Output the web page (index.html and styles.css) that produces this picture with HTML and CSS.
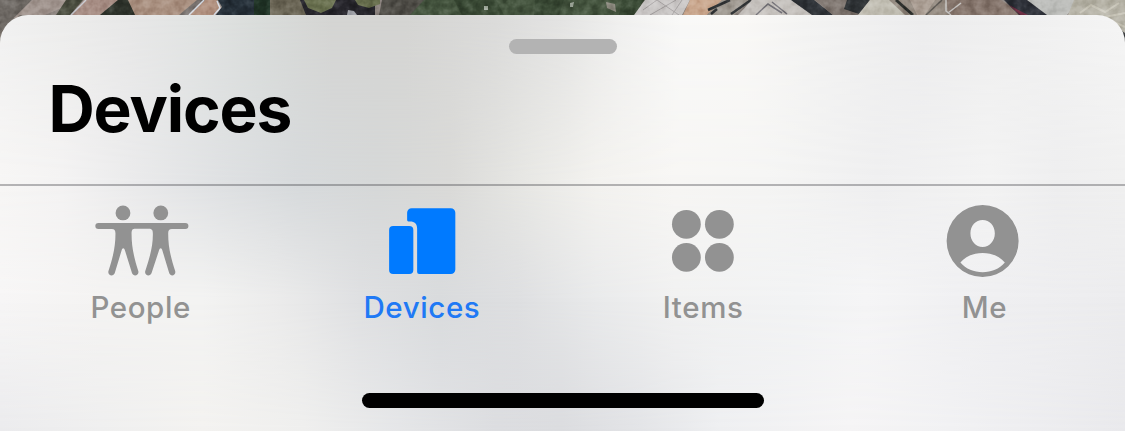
FILE: index.html
```html
<!DOCTYPE html>
<html lang="en">
<head>
<meta charset="utf-8">
<title>Devices</title>
<link rel="stylesheet" href="styles.css">
</head>
<body>
<div class="screen">
  <svg class="map" viewBox="0 0 1125 46" aria-hidden="true">
    <defs>
      <filter id="grain" x="0" y="0" width="100%" height="100%" color-interpolation-filters="sRGB">
        <feGaussianBlur in="SourceGraphic" stdDeviation=".6" result="soft"/>
        <feTurbulence type="fractalNoise" baseFrequency=".12" numOctaves="3" seed="8"/>
        <feColorMatrix values="1.6 0 0 0 -.35  1.6 0 0 0 -.35  1.6 0 0 0 -.35  0 0 0 0 .35"/>
        <feBlend in2="soft" mode="soft-light"/>
      </filter>
    </defs>
    <g filter="url(#grain)">
      <path fill="#8d8580" d="M0 0h1125v46H0z"/>
      <path fill="#6f6a65" d="M0 0h32L0 32z"/>
      <path fill="#a69a94" d="M32 0h48L38 18H14z"/>
      <path fill="#777069" d="M0 32L20 15h14L0 46z"/>
      <path fill="#4d5042" d="M66 0h17L70 15H56z"/>
      <path fill="#aa9188" d="M84 0h34L100 15H71z"/>
      <path stroke="#c9ccd2" stroke-width="1.5" d="M86 0L71 15"/>
      <path fill="#31362e" d="M118 0h11l9 15h-38z"/>
      <path fill="#aa9181" d="M128 0h69l-9 15h-53z"/>
      <path fill="#77716e" d="M197 0h7l-16 15h-9z"/>
      <path fill="#b39483" d="M205 0h12l4 8-6 7h-26z"/>
      <path fill="none" stroke="#d8dde5" stroke-width="1.5" d="M204 0l-15 15M217 1l3 7-6 7"/>
      <path fill="#263039" d="M218 0h38v15h-40l6-8z"/>
      <path fill="#203326" d="M254 0h16v15h-16z"/>
      <path fill="#6b6656" d="M270 0h38l10 15h-48z"/>
      <path fill="#27262c" d="M300 0h75v15h-69z"/>
      <path fill="#69704f" d="M304 0h32l-4 8-11 5-13-5zM355 0h25v4l-11 4-11-3z"/>
      <path fill="#9d9fa5" d="M348 10l6 1 3 4h-10z"/>
      <path fill="#52504a" d="M382 0h46l-12 15h-37z"/>
      <path fill="#465640" d="M424 0h221l-15 15H410z"/>
      <path fill="#3b4b36" d="M454 0h42l8 15h-42zM535 0h29l-5 15h-25zM622 0h22l-8 15h-17z"/>
      <path fill="#a4aca0" d="M484 6h4v4h-4zM570 3l4-1-1 5h-3z"/>
      <path fill="#8d8b80" d="M606 2l9 2 1 8-9-4z"/>
      <path fill="#cbc8c7" d="M645 0h45l-8 15h-48z"/>
      <path fill="none" stroke="#a7a3a3" d="M643 10l14-10 22 15M650 15l26-15M682 0l-10 15"/>
      <path fill="#caa88f" d="M690 0h32l-15 15h-24z"/>
      <path fill="#a19b93" d="M722 0h29l-17 15h-27z"/>
      <path fill="none" stroke="#333638" stroke-width="2.500" d="M708 10l22-10M731 14l20-14M711 14l6-5"/>
      <path fill="#c7c3bf" d="M752 0h42l20 15h-76z"/>
      <path fill="none" stroke="#77757b" stroke-width="1.500" d="M756 15l12-11 14 9M772 2l15 12"/>
      <path fill="#34383d" d="M791 0h23l19 15h-14L805 5l15 10h-8z"/>
      <path fill="#7e756f" d="M815 0h60l-12 15h-30z"/>
      <path fill="#303437" d="M847 0h23l-11 14-15-5z"/>
      <path fill="#c3c0b5" d="M870 0h20l21 15h-53z"/>
      <path fill="#948a80" d="M889 0h110l28 15H905z"/>
      <path fill="none" stroke="#2e302d" stroke-width="3" d="M896 0l17 15"/>
      <path fill="#b0a49a" d="M910 0h25l-10 15h-8z"/>
      <path fill="none" stroke="#5d5954" stroke-width="1.500" d="M942 0l-16 15"/>
      <path fill="#88786f" d="M946 0h55l22 15h-74z"/>
      <path fill="none" stroke="#c8c6c4" stroke-width="1.500" d="M948 13l13-10M946 0v11l5 4"/>
      <path fill="#30333b" d="M1004 0h24l22 15h-31z"/>
      <path fill="#713247" d="M1009 5l19 10h-8z"/>
      <path fill="#bfc0bd" d="M1027 0h52l-12 15h-20z"/>
      <path fill="#b8b5a9" d="M1074 0h51v46l-22-30-35-1z"/>
      <path fill="none" stroke="#cbc8bc" stroke-width="2" d="M1080 13l11-8 14 7 14-9M1105 17l20-4M1114 22l11 5"/>
      <path fill="#44474a" d="M1122 31l3 2v13h-3z"/>
    </g>
  </svg>

  <main class="sheet">
    <svg class="glass" viewBox="0 15 1125 416" preserveAspectRatio="none" aria-hidden="true">
      <defs>
        <linearGradient id="row1">
          <stop offset="0" stop-color="#f1f1f1"/><stop offset=".055" stop-color="#ededec"/><stop offset=".115" stop-color="#e8e8e8"/><stop offset=".17" stop-color="#e2e4e3"/><stop offset=".23" stop-color="#dadddb"/><stop offset=".295" stop-color="#d5d5d3"/><stop offset=".36" stop-color="#d5d5d3"/><stop offset=".44" stop-color="#dbdbda"/><stop offset=".5" stop-color="#e4e4e3"/><stop offset=".55" stop-color="#f0f0ef"/><stop offset=".605" stop-color="#f9f9f8"/><stop offset=".66" stop-color="#faf9f7"/><stop offset=".715" stop-color="#f4f4f3"/><stop offset=".82" stop-color="#ededee"/><stop offset=".9" stop-color="#f0f0f0"/><stop offset="1" stop-color="#f5f5f5"/>
        </linearGradient>
        <linearGradient id="row2">
          <stop offset="0" stop-color="#f7f6f5"/><stop offset=".055" stop-color="#f4f3f3"/><stop offset=".115" stop-color="#ebebec"/><stop offset=".195" stop-color="#dfe1e3"/><stop offset=".265" stop-color="#d7dadc"/><stop offset=".335" stop-color="#d6d8d8"/><stop offset=".4" stop-color="#dadad8"/><stop offset=".46" stop-color="#e6e6e3"/><stop offset=".53" stop-color="#f3f2ef"/><stop offset=".6" stop-color="#f7f6f4"/><stop offset=".68" stop-color="#f5f5f4"/><stop offset=".78" stop-color="#efeff0"/><stop offset=".88" stop-color="#f3f3f3"/><stop offset=".94" stop-color="#eeeeef"/><stop offset="1" stop-color="#f0f0f0"/>
        </linearGradient>
        <linearGradient id="row3">
          <stop offset="0" stop-color="#f7f6f6"/><stop offset=".09" stop-color="#f4f3f2"/><stop offset=".18" stop-color="#f3f3f2"/><stop offset=".25" stop-color="#ebebeb"/><stop offset=".32" stop-color="#dfe0e2"/><stop offset=".39" stop-color="#d9dbdd"/><stop offset=".46" stop-color="#dedfe1"/><stop offset=".53" stop-color="#e9eaeb"/><stop offset=".6" stop-color="#f1f1f1"/><stop offset=".71" stop-color="#f2f3f4"/><stop offset=".77" stop-color="#f5f5f6"/><stop offset=".85" stop-color="#f0f0f2"/><stop offset="1" stop-color="#ececee"/>
        </linearGradient>
        <linearGradient id="row4">
          <stop offset="0" stop-color="#ebebed"/><stop offset=".09" stop-color="#efefef"/><stop offset=".18" stop-color="#f3f2f0"/><stop offset=".27" stop-color="#efefee"/><stop offset=".355" stop-color="#e5e6e8"/><stop offset=".44" stop-color="#dcdde0"/><stop offset=".5" stop-color="#dbdcdf"/><stop offset=".57" stop-color="#e3e4e7"/><stop offset=".64" stop-color="#eeeff1"/><stop offset=".755" stop-color="#f5f4f5"/><stop offset=".845" stop-color="#f1f1f3"/><stop offset="1" stop-color="#e9e9ec"/>
        </linearGradient>
        <linearGradient id="fade" x2="0" y2="1"><stop offset="0" stop-color="#fff" stop-opacity="0"/><stop offset="1" stop-color="#fff"/></linearGradient>
        <mask id="m2" class="alpha-mask" maskUnits="userSpaceOnUse" x="0" y="15" width="1125" height="170"><path fill="url(#fade)" d="M0 15h1125v170H0z"/></mask>
        <mask id="m3" class="alpha-mask" maskUnits="userSpaceOnUse" x="0" y="185" width="1125" height="115"><path fill="url(#fade)" d="M0 185h1125v115H0z"/></mask>
        <mask id="m4" class="alpha-mask" maskUnits="userSpaceOnUse" x="0" y="300" width="1125" height="131"><path fill="url(#fade)" d="M0 300h1125v131H0z"/></mask>
      </defs>
      <path fill="url(#row1)" d="M0 15h1125v170H0z"/>
      <path fill="url(#row2)" mask="url(#m2)" d="M0 15h1125v170H0z"/>
      <path fill="url(#row2)" d="M0 185h1125v115H0z"/>
      <path fill="url(#row3)" mask="url(#m3)" d="M0 185h1125v115H0z"/>
      <path fill="url(#row3)" d="M0 300h1125v131H0z"/>
      <path fill="url(#row4)" mask="url(#m4)" d="M0 300h1125v131H0z"/>
    </svg>

    <header class="header">
      <div class="grabber"></div>
      <h1 class="title">Devices</h1>
    </header>

    <nav class="tabs">
      <a class="tab">
        <svg class="icon" viewBox="92.625 200 96 80">
          <circle cx="122.6" cy="212.9" r="7.4"/><circle cx="160.4" cy="212.9" r="7.4"/>
          <path d="M98 222.900h87a3 3 0 0 1 0 6.100h-13.500c-2.500 0-3.700 1.300-3.700 4 0 14 2.500 24 7 38 1.200 4.500-4.600 6.200-6 2l-6.800-22.500c-.8-3-2.600-3-3.400 0L151.200 273c-1.400 4.200-7.600 2.500-6.300-2 4.500-14 7.600-24 7.600-37 0-4-.8-5-4-5.200h-13.500c-3 0-3.800 1.200-3.800 5.200 0 13 2.300 23 6.700 37 1.300 4.500-4.900 6.200-6.300 2l-7-22.500c-.8-3-2.600-3-3.400 0L114.400 273c-1.400 4.200-7.600 2.500-6.300-2 4.500-14 7-24 7-37.500 0-3.200-1.100-4.500-3.600-4.500H98a3 3 0 0 1 0-6.100z"/>
        </svg>
        <span class="label">People</span>
      </a>
      <a class="tab active" aria-current="page">
        <svg class="icon" viewBox="373.875 200 96 80">
          <rect x="389" y="226" width="24.200" height="48" rx="4"/>
          <path d="M411.500 208.200h39.200a4.500 4.500 0 0 1 4.500 4.500v56.800a4.500 4.500 0 0 1-4.500 4.500h-31.700a2 2 0 0 1-2-2v-43.300c0-4.700-2.500-7.200-7-7.200h-1.700a1.500 1.500 0 0 1-1.300-1.500v-7.300a4.500 4.500 0 0 1 4.500-4.500z"/>
        </svg>
        <span class="label">Devices</span>
      </a>
      <a class="tab">
        <svg class="icon" viewBox="655.125 200 96 80">
          <circle cx="686.500" cy="224.300" r="14.400"/><circle cx="719.500" cy="224.300" r="14.400"/><circle cx="686.500" cy="257.400" r="14.400"/><circle cx="719.500" cy="257.400" r="14.400"/>
        </svg>
        <span class="label">Items</span>
      </a>
      <a class="tab">
        <svg class="icon" viewBox="936.375 200 96 80">
          <path fill-rule="evenodd" d="M983 205a36 36 0 1 1 0 72 36 36 0 0 1 0-72zm0 15c-7 0-12.200 5.700-12.200 13.300 0 8 5.400 13.700 12.200 13.700s12.200-5.700 12.200-13.700c0-7.600-5.200-13.300-12.200-13.300zm0 33c-9 0-17.500 3.500-22.200 9.500 5.400 6.500 13.500 9.700 22.200 9.700s16.800-3.200 22.200-9.700c-4.700-6-13.200-9.500-22.200-9.500z"/>
        </svg>
        <span class="label">Me</span>
      </a>
    </nav>
    <div class="home-indicator"></div>
  </main>
</div>
</body>
</html>
```
FILE: styles.css
```css
* { box-sizing: border-box; }
body { margin: 0; overflow: hidden; font-family: Inter, "Liberation Sans", sans-serif; }
.screen { position: relative; width: 1125px; height: 431px; padding-top: 15px; }
.map { position: absolute; top: 0; left: 0; width: 1125px; height: 46px; }
.sheet {
  position: relative;
  isolation: isolate;
  height: 416px;
  display: flex;
  flex-direction: column;
  align-items: center;
  overflow: hidden;
  border-radius: 28px 28px 0 0;
}
.glass { position: absolute; inset: 0; z-index: -1; width: 100%; height: 100%; }
.alpha-mask { mask-type: alpha; }
.header {
  width: 100%;
  height: 171px;
  flex: none;
  padding-top: 24px;
  border-bottom: 2px solid rgba(60, 60, 67, .36);
}
.grabber { width: 108px; height: 15px; margin: 0 auto; border-radius: 8px; background: #b3b3b3; }
.title {
  margin: 15px 0 0 48.5px;
  font-size: 64px;
  line-height: 80px;
  font-weight: 700;
  letter-spacing: -1.1px;
  color: #000;
}
.tabs { width: 100%; display: grid; grid-template-columns: repeat(4, 1fr); padding-top: 14px; }
.tab { display: flex; flex-direction: column; align-items: center; color: #929292; }
.active { color: #007aff; }
.icon { width: 96px; height: 80px; fill: currentColor; }
.label { margin-top: 9px; font-size: 29.5px; line-height: 36px; font-weight: 500; letter-spacing: .6px; }
.active .label { color: #2079f5; }
.home-indicator { width: 402px; height: 15px; margin-top: 68px; border-radius: 8px; background: #000; }
```
